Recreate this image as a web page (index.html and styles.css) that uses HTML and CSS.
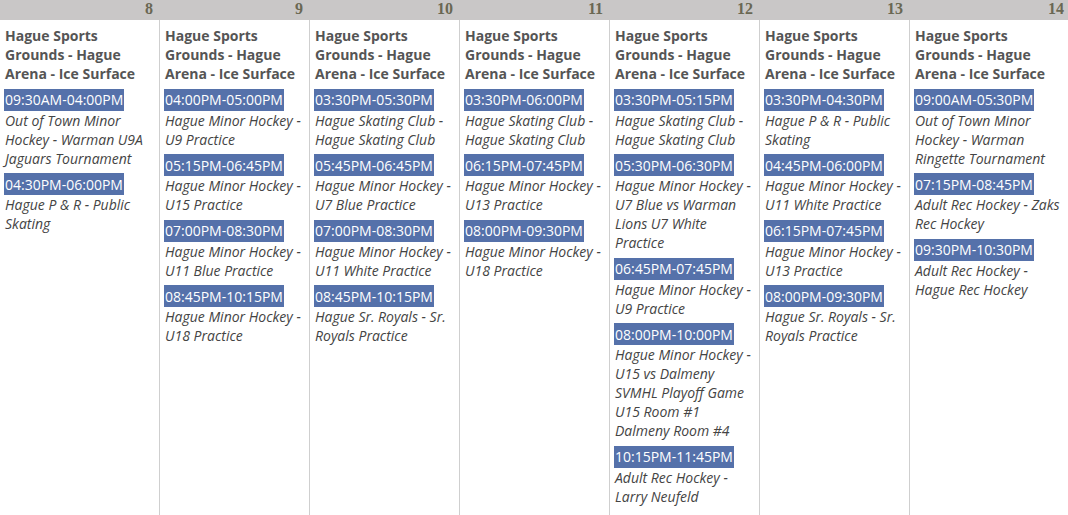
FILE: index.html
```html
<!DOCTYPE html>
<html>
<head>
<meta charset="utf-8">
<link rel="stylesheet" href="styles.css">
</head>
<body>
<div class="week">
  <div class="head">8</div>
  <div class="head">9</div>
  <div class="head">10</div>
  <div class="head">11</div>
  <div class="head">12</div>
  <div class="head">13</div>
  <div class="head">14</div>

  <div class="day first">
    <div class="venue">Hague Sports Grounds - Hague Arena - Ice Surface</div>
    <div class="event"><span class="time">09:30AM-04:00PM</span><div class="desc">Out of Town Minor Hockey - Warman U9A Jaguars Tournament</div></div>
    <div class="event"><span class="time">04:30PM-06:00PM</span><div class="desc">Hague P &amp; R - Public Skating</div></div>
  </div>

  <div class="day">
    <div class="venue">Hague Sports Grounds - Hague Arena - Ice Surface</div>
    <div class="event"><span class="time">04:00PM-05:00PM</span><div class="desc">Hague Minor Hockey - U9 Practice</div></div>
    <div class="event"><span class="time">05:15PM-06:45PM</span><div class="desc">Hague Minor Hockey - U15 Practice</div></div>
    <div class="event"><span class="time">07:00PM-08:30PM</span><div class="desc">Hague Minor Hockey - U11 Blue Practice</div></div>
    <div class="event"><span class="time">08:45PM-10:15PM</span><div class="desc">Hague Minor Hockey - U18 Practice</div></div>
  </div>

  <div class="day">
    <div class="venue">Hague Sports Grounds - Hague Arena - Ice Surface</div>
    <div class="event"><span class="time">03:30PM-05:30PM</span><div class="desc">Hague Skating Club - Hague Skating Club</div></div>
    <div class="event"><span class="time">05:45PM-06:45PM</span><div class="desc">Hague Minor Hockey - U7 Blue Practice</div></div>
    <div class="event"><span class="time">07:00PM-08:30PM</span><div class="desc">Hague Minor Hockey - U11 White Practice</div></div>
    <div class="event"><span class="time">08:45PM-10:15PM</span><div class="desc">Hague Sr. Royals - Sr. Royals Practice</div></div>
  </div>

  <div class="day">
    <div class="venue">Hague Sports Grounds - Hague Arena - Ice Surface</div>
    <div class="event"><span class="time">03:30PM-06:00PM</span><div class="desc">Hague Skating Club - Hague Skating Club</div></div>
    <div class="event"><span class="time">06:15PM-07:45PM</span><div class="desc">Hague Minor Hockey - U13 Practice</div></div>
    <div class="event"><span class="time">08:00PM-09:30PM</span><div class="desc">Hague Minor Hockey - U18 Practice</div></div>
  </div>

  <div class="day">
    <div class="venue">Hague Sports Grounds - Hague Arena - Ice Surface</div>
    <div class="event"><span class="time">03:30PM-05:15PM</span><div class="desc">Hague Skating Club - Hague Skating Club</div></div>
    <div class="event"><span class="time">05:30PM-06:30PM</span><div class="desc">Hague Minor Hockey - U7 Blue vs Warman Lions U7 White Practice</div></div>
    <div class="event"><span class="time">06:45PM-07:45PM</span><div class="desc">Hague Minor Hockey - U9 Practice</div></div>
    <div class="event"><span class="time">08:00PM-10:00PM</span><div class="desc">Hague Minor Hockey - U15 vs Dalmeny SVMHL Playoff Game U15 Room #1 Dalmeny Room #4</div></div>
    <div class="event"><span class="time">10:15PM-11:45PM</span><div class="desc">Adult Rec Hockey - Larry Neufeld</div></div>
  </div>

  <div class="day">
    <div class="venue">Hague Sports Grounds - Hague Arena - Ice Surface</div>
    <div class="event"><span class="time">03:30PM-04:30PM</span><div class="desc">Hague P &amp; R - Public Skating</div></div>
    <div class="event"><span class="time">04:45PM-06:00PM</span><div class="desc">Hague Minor Hockey - U11 White Practice</div></div>
    <div class="event"><span class="time">06:15PM-07:45PM</span><div class="desc">Hague Minor Hockey - U13 Practice</div></div>
    <div class="event"><span class="time">08:00PM-09:30PM</span><div class="desc">Hague Sr. Royals - Sr. Royals Practice</div></div>
  </div>

  <div class="day">
    <div class="venue">Hague Sports Grounds - Hague Arena - Ice Surface</div>
    <div class="event"><span class="time">09:00AM-05:30PM</span><div class="desc">Out of Town Minor Hockey - Warman Ringette Tournament</div></div>
    <div class="event"><span class="time">07:15PM-08:45PM</span><div class="desc">Adult Rec Hockey - Zaks Rec Hockey</div></div>
    <div class="event"><span class="time">09:30PM-10:30PM</span><div class="desc">Adult Rec Hockey - Hague Rec Hockey</div></div>
  </div>
</div>
</body>
</html>
```

FILE: styles.css
```css
html, body {
  margin: 0;
  padding: 0;
  background: #ffffff;
  overflow: hidden;
}

.week {
  display: grid;
  grid-template-columns: 160px 150px 150px 150px 150px 150px 161px;
  grid-template-rows: 20px 495px;
  margin-left: -1px;
  width: 1071px;
  font-family: "Open Sans", sans-serif;
  font-size: 14px;
  line-height: 19px;
}

.head {
  background: #c9c7c7;
  text-align: right;
  padding-right: 6px;
  font-family: "Liberation Serif", "DejaVu Serif", serif;
  font-weight: bold;
  font-size: 16px;
  line-height: 18px;
  color: #6a6753;
}

.day {
  border-left: 1px solid #cfcfcf;
  padding: 6px 5px 0 5px;
  display: flex;
  flex-direction: column;
  gap: 5.5px;
}

.venue {
  font-weight: bold;
  color: #555555;
}

.event {
  display: flex;
  flex-direction: column;
  align-items: flex-start;
}

.time {
  display: inline-block;
  background: #5571aa;
  color: #ffffff;
  padding: 1.5px 1px;
  margin-left: -1px;
}

.desc {
  font-style: italic;
  color: #444444;
}
```
